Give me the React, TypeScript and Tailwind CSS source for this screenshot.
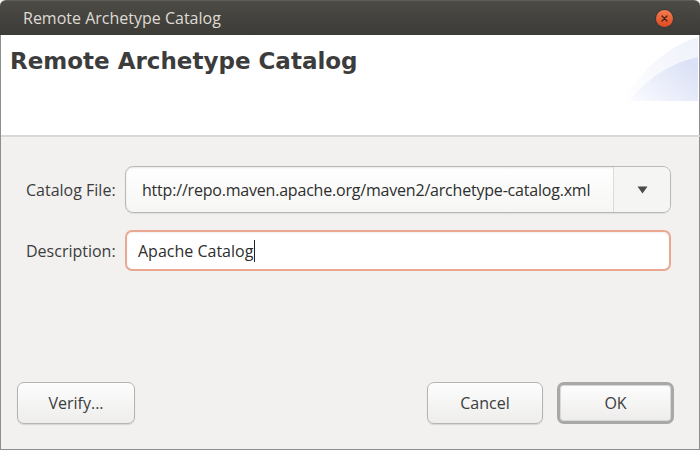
import React from "react";

const ui = { fontFamily: '"Open Sans", "Noto Sans", sans-serif' };

function Btn({ label, def, w }: { label: string; def?: boolean; w: string }) {
  return (
    <div
      className={`${w} h-[42px] flex items-center justify-center rounded-[7px] text-[16px] text-[#3c3c3c] bg-gradient-to-b from-[#fdfdfd] to-[#eeedec] ${
        def
          ? "border-[3px] border-[#a8a8a6] shadow-[inset_0_0_0_1px_#d8d8d6]"
          : "border border-[#b4b4b2] shadow-[0_1px_1px_rgba(0,0,0,0.12)]"
      }`}
      style={ui}
    >
      {label}
    </div>
  );
}

export default function App() {
  return (
    <div className="w-[700px] h-[450px] flex flex-col overflow-hidden bg-[#f2f1f0]" style={ui}>
      {/* title bar */}
      <div className="h-[35px] flex items-center justify-between rounded-t-[6px] bg-gradient-to-b from-[#4d4b46] to-[#3c3b37] border-t border-[#5f5d58] pl-[23px] pr-[27px]">
        <span className="text-[16px] text-[#dfdbd2] leading-none" style={ui}>
          Remote Archetype Catalog
        </span>
        <div className="w-[17px] h-[17px] rounded-full bg-gradient-to-b from-[#f47b50] to-[#de4a1e] flex items-center justify-center shadow-[0_0_0_1px_#3a3935]">
          <svg width="7" height="7" viewBox="0 0 7 7">
            <path d="M1 1 L6 6 M6 1 L1 6" stroke="#4a2010" strokeWidth="1.3" strokeLinecap="round" />
          </svg>
        </div>
      </div>
      {/* header */}
      <div className="relative h-[100px] bg-white border-l border-[#8f8e8b] border-r">
        <div
          className="pl-[9px] pt-[11px] text-[23px] font-bold text-[#3c3c3c] leading-[30px]"
          style={{ fontFamily: '"DejaVu Sans", sans-serif' }}
        >
          Remote Archetype Catalog
        </div>
        <svg className="absolute right-0 top-0" width="80" height="66" viewBox="0 0 80 66">
          <defs>
            <linearGradient id="g1" x1="0" y1="1" x2="1" y2="0">
              <stop offset="0" stopColor="#ffffff" />
              <stop offset="1" stopColor="#eef1fb" />
            </linearGradient>
            <linearGradient id="g2" x1="0" y1="1" x2="1" y2="0.3">
              <stop offset="0" stopColor="#fbfcff" />
              <stop offset="1" stopColor="#dbe1f6" />
            </linearGradient>
          </defs>
          <path d="M4 66 C 22 35, 48 12, 79 2 L 79 66 Z" fill="url(#g1)" />
          <path d="M10 66 C 30 42, 52 28, 79 22 L 79 66 Z" fill="url(#g2)" />
        </svg>
      </div>
      <div className="h-[2px] bg-[#d9d8d6] border-l border-[#8f8e8b]" />
      {/* body */}
      <div className="flex-1 flex flex-col border-l border-r border-b border-[#8f8e8b]">
        <div className="grid grid-cols-[99px_1fr] items-center gap-y-[17px] pl-[25px] pr-[28px] pt-[29px]">
          <span className="text-[16px] text-[#3c3c3c]">Catalog File:</span>
          <div className="h-[47px] flex rounded-[8px] border border-[#b8b8b6] bg-gradient-to-b from-[#ffffff] to-[#f6f6f5] shadow-[inset_0_1px_2px_rgba(0,0,0,0.1),0_1px_1px_rgba(0,0,0,0.08)] overflow-hidden">
            <div className="flex-1 flex items-center pl-[16px] text-[16px] text-[#2e2e2e] tracking-[-0.2px] whitespace-nowrap">
              http://repo.maven.apache.org/maven2/archetype-catalog.xml
            </div>
            <div className="w-px bg-[#dcdcda]" />
            <div className="w-[56px] flex items-center justify-center bg-[#f5f5f4]">
              <svg width="11" height="8" viewBox="0 0 11 8">
                <path d="M0.5 0.5 L10.5 0.5 L5.5 7.5 Z" fill="#4a4a4a" />
              </svg>
            </div>
          </div>
          <span className="text-[16px] text-[#3c3c3c]">Description:</span>
          <div className="h-[41px] flex items-center rounded-[7px] border-2 border-[#eaa893] bg-white shadow-[inset_0_1px_2px_rgba(0,0,0,0.06)] pl-[11px] text-[16px] text-[#2e2e2e]">
            Apache Catalog
            <span className="inline-block w-px h-[22px] bg-[#222] ml-[1px]" />
          </div>
        </div>
        <div className="flex-1" />
        <div className="flex items-center pl-[16px] pr-[25px] pb-[25px]">
          <Btn label="Verify..." w="w-[118px]" />
          <div className="flex-1" />
          <Btn label="Cancel" w="w-[116px]" />
          <div className="w-[14px]" />
          <Btn label="OK" def w="w-[117px]" />
        </div>
      </div>
    </div>
  );
}
